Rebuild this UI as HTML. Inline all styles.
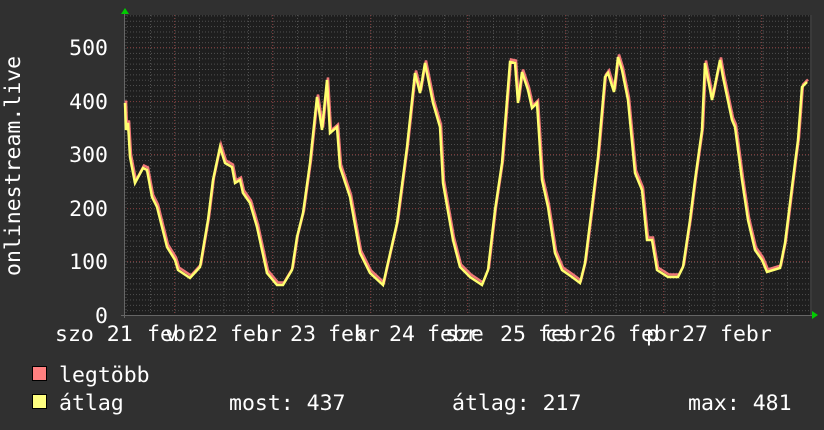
<!DOCTYPE html>
<html><head><meta charset="utf-8"><style>
html,body{margin:0;padding:0;background:#303030;}
svg{display:block}
text{font-family:"DejaVu Sans Mono","Liberation Mono",monospace;fill:#fff;font-size:21.5px}
</style></head><body>
<svg width="824" height="430" viewBox="0 0 824 430" xmlns="http://www.w3.org/2000/svg">
<defs>
<pattern id="hg" x="124" y="15.4" width="824" height="5.36" patternUnits="userSpaceOnUse">
<line x1="0" y1="0.5" x2="824" y2="0.5" stroke="#505050" stroke-width="1" stroke-dasharray="1,2"/>
</pattern>
<pattern id="vg" x="125.5" y="0" width="24.5" height="430" patternUnits="userSpaceOnUse">
<line x1="0.5" y1="0" x2="0.5" y2="430" stroke="#505050" stroke-width="1" stroke-dasharray="1,2"/>
</pattern>
</defs>
<rect x="124" y="15" width="686" height="300" fill="#1e1e1e"/>
<rect x="810" y="15" width="2" height="300" fill="#3a3a3a"/>
<rect x="124" y="15" width="686" height="300" fill="url(#hg)"/>
<rect x="124" y="15" width="686" height="300" fill="url(#vg)"/>
<g stroke="#7a3a3a" stroke-width="1" stroke-dasharray="1,2">
<line x1="124" y1="47.5" x2="810" y2="47.5"/><line x1="124" y1="101.5" x2="810" y2="101.5"/>
<line x1="124" y1="154.5" x2="810" y2="154.5"/><line x1="124" y1="208.5" x2="810" y2="208.5"/>
<line x1="124" y1="261.5" x2="810" y2="261.5"/>
<line x1="174.5" y1="15" x2="174.5" y2="318"/><line x1="272.5" y1="15" x2="272.5" y2="318"/>
<line x1="370.5" y1="15" x2="370.5" y2="318"/><line x1="467.5" y1="15" x2="467.5" y2="318"/>
<line x1="565.5" y1="15" x2="565.5" y2="318"/><line x1="663.5" y1="15" x2="663.5" y2="318"/>
<line x1="761.5" y1="15" x2="761.5" y2="318"/>
</g>
<line x1="124.5" y1="12" x2="124.5" y2="318" stroke="#666"/>
<line x1="121" y1="315.5" x2="812" y2="315.5" stroke="#666"/>
<polygon points="121,14 125,8 129,14" fill="#0c0"/>
<polygon points="812,311 818,315 812,319" fill="#0c0"/>
<polyline fill="none" stroke="#f07878" stroke-width="2.5" transform="translate(1,-2.5)" points="125,103 126,130 128,123 130,157 135,183 143,168 147,170 152,197 157,207 167,247 175,260 178,270 190,278 200,267 208,220 213,180 220,147 225,163 232,167 235,183 240,180 243,193 250,203 257,227 267,273 277,285 283,285 292,270 297,237 303,213 310,163 317,97 322,130 327,80 330,133 337,127 340,167 350,197 360,253 370,273 383,285 387,267 397,223 407,147 415,73 420,93 425,63 433,103 440,127 443,183 453,240 460,267 470,277 482,285 488,270 495,210 502,163 510,62 515,63 518,103 522,72 528,90 532,108 537,103 542,180 548,207 555,253 562,270 572,277 580,283 585,263 592,207 598,157 605,77 608,73 614,92 618,57 622,70 628,100 635,173 642,190 647,240 652,240 657,270 668,277 678,277 683,267 690,220 695,180 702,130 705,63 712,100 720,60 723,77 732,120 735,127 742,180 748,220 755,250 762,260 767,272 780,268 785,243 795,163 798,140 802,87 807,82"/>
<polyline fill="none" stroke="#ffff70" stroke-width="2.5" points="125,103 126,130 128,123 130,157 135,183 143,168 147,170 152,197 157,207 167,247 175,260 178,270 190,278 200,267 208,220 213,180 220,147 225,163 232,167 235,183 240,180 243,193 250,203 257,227 267,273 277,285 283,285 292,270 297,237 303,213 310,163 317,97 322,130 327,80 330,133 337,127 340,167 350,197 360,253 370,273 383,285 387,267 397,223 407,147 415,73 420,93 425,63 433,103 440,127 443,183 453,240 460,267 470,277 482,285 488,270 495,210 502,163 510,62 515,63 518,103 522,72 528,90 532,108 537,103 542,180 548,207 555,253 562,270 572,277 580,283 585,263 592,207 598,157 605,77 608,73 614,92 618,57 622,70 628,100 635,173 642,190 647,240 652,240 657,270 668,277 678,277 683,267 690,220 695,180 702,130 705,63 712,100 720,60 723,77 732,120 735,127 742,180 748,220 755,250 762,260 767,272 780,268 785,243 795,163 798,140 802,87 807,82"/>
<g text-anchor="end">
<text x="108" y="55">500</text><text x="108" y="109">400</text><text x="108" y="162">300</text>
<text x="108" y="216">200</text><text x="108" y="269">100</text><text x="108" y="323">0</text>
</g>
<text transform="translate(20,276) rotate(-90)">onlinestream.live</text>
<g>
<text x="55" y="341">szo 21</text>
<text x="147" y="341">febr</text><text x="165" y="341">v</text><text x="192" y="341">22</text>
<text x="230" y="341">febr</text><text x="256" y="341">h</text><text x="290" y="341">23</text>
<text x="328" y="341">febr</text><text x="354" y="341">k</text><text x="389" y="341">24</text>
<text x="427" y="341">febr</text><text x="445" y="341">sze</text><text x="500" y="341">25</text>
<text x="538" y="341">febr</text><text x="545" y="341">cs</text><text x="590" y="341">26</text>
<text x="628" y="341">febr</text><text x="646" y="341">p</text><text x="682" y="341">27</text>
<text x="720" y="341">febr</text>
</g>
<rect x="32.5" y="366.5" width="14" height="14" fill="#ff8080" stroke="#000"/>
<rect x="32.5" y="394.5" width="14" height="14" fill="#ffff80" stroke="#000"/>
<text x="59" y="382">legtöbb</text>
<text x="59" y="410">átlag</text>
<text x="229" y="410">most: 437</text>
<text x="452" y="410">átlag: 217</text>
<text x="688" y="410">max: 481</text>
</svg>
</body></html>
